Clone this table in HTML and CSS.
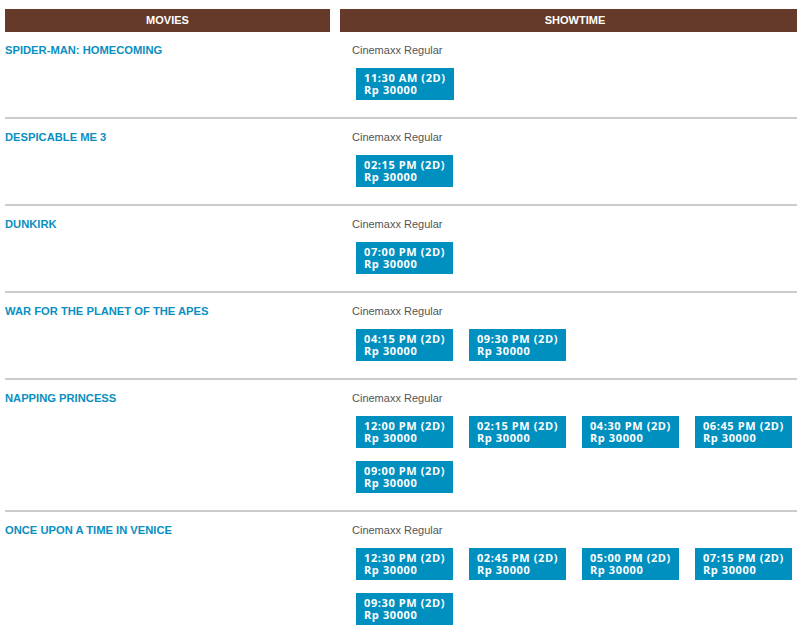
FILE: index.html
```html
<!DOCTYPE html>
<html>
<head>
<meta charset="utf-8">
<link rel="stylesheet" href="styles.css">
</head>
<body>
<div class="schedule">
  <div class="head">
    <div class="head-cell">MOVIES</div>
    <div class="head-cell">SHOWTIME</div>
  </div>

  <div class="movie">
    <div class="title">SPIDER-MAN: HOMECOMING</div>
    <div class="shows">
      <div class="cinema">Cinemaxx Regular</div>
      <div class="times">
        <a class="time">11:30 AM (2D)<br>Rp 30000</a>
      </div>
    </div>
  </div>

  <div class="movie">
    <div class="title">DESPICABLE ME 3</div>
    <div class="shows">
      <div class="cinema">Cinemaxx Regular</div>
      <div class="times">
        <a class="time">02:15 PM (2D)<br>Rp 30000</a>
      </div>
    </div>
  </div>

  <div class="movie">
    <div class="title">DUNKIRK</div>
    <div class="shows">
      <div class="cinema">Cinemaxx Regular</div>
      <div class="times">
        <a class="time">07:00 PM (2D)<br>Rp 30000</a>
      </div>
    </div>
  </div>

  <div class="movie">
    <div class="title">WAR FOR THE PLANET OF THE APES</div>
    <div class="shows">
      <div class="cinema">Cinemaxx Regular</div>
      <div class="times">
        <a class="time">04:15 PM (2D)<br>Rp 30000</a>
        <a class="time">09:30 PM (2D)<br>Rp 30000</a>
      </div>
    </div>
  </div>

  <div class="movie">
    <div class="title">NAPPING PRINCESS</div>
    <div class="shows">
      <div class="cinema">Cinemaxx Regular</div>
      <div class="times">
        <a class="time">12:00 PM (2D)<br>Rp 30000</a>
        <a class="time">02:15 PM (2D)<br>Rp 30000</a>
        <a class="time">04:30 PM (2D)<br>Rp 30000</a>
        <a class="time">06:45 PM (2D)<br>Rp 30000</a>
        <a class="time">09:00 PM (2D)<br>Rp 30000</a>
      </div>
    </div>
  </div>

  <div class="movie">
    <div class="title">ONCE UPON A TIME IN VENICE</div>
    <div class="shows">
      <div class="cinema">Cinemaxx Regular</div>
      <div class="times">
        <a class="time">12:30 PM (2D)<br>Rp 30000</a>
        <a class="time">02:45 PM (2D)<br>Rp 30000</a>
        <a class="time">05:00 PM (2D)<br>Rp 30000</a>
        <a class="time">07:15 PM (2D)<br>Rp 30000</a>
        <a class="time">09:30 PM (2D)<br>Rp 30000</a>
      </div>
    </div>
  </div>
</div>
</body>
</html>
```

FILE: styles.css
```css
html, body {
  margin: 0;
  padding: 0;
  background: #fff;
}

body {
  font-family: "Liberation Sans", Arial, sans-serif;
  font-size: 11px;
  overflow: hidden;
}

.schedule {
  padding: 9px 0 0 5px;
  width: 805px;
}

.head {
  display: grid;
  grid-template-columns: 325px 470px;
  column-gap: 10px;
}

.head-cell {
  background: #653a2a;
  color: #fff;
  font-weight: bold;
  text-align: center;
  height: 23px;
  line-height: 23px;
}

.movie {
  display: grid;
  grid-template-columns: 325px 457px;
  column-gap: 10px;
  width: 792px;
  border-bottom: 2px solid #cccccc;
  padding: 9px 0 17px;
}

.title {
  color: #0a8fc0;
  font-weight: bold;
  font-size: 11.2px;
  line-height: 18px;
}

.shows {
  padding-left: 12px;
}

.cinema {
  color: #555;
  line-height: 18px;
}

.times {
  display: flex;
  flex-wrap: wrap;
  column-gap: 16px;
  row-gap: 13px;
  margin-top: 9px;
  padding-left: 4px;
}

.time {
  display: block;
  background: #0090c0;
  color: #fff;
  font-family: "Open Sans", "Noto Sans", sans-serif;
  font-weight: 700;
  font-size: 11px;
  line-height: 12px;
  letter-spacing: 0.6px;
  padding: 4px 8px;
  height: 24px;
}
```
